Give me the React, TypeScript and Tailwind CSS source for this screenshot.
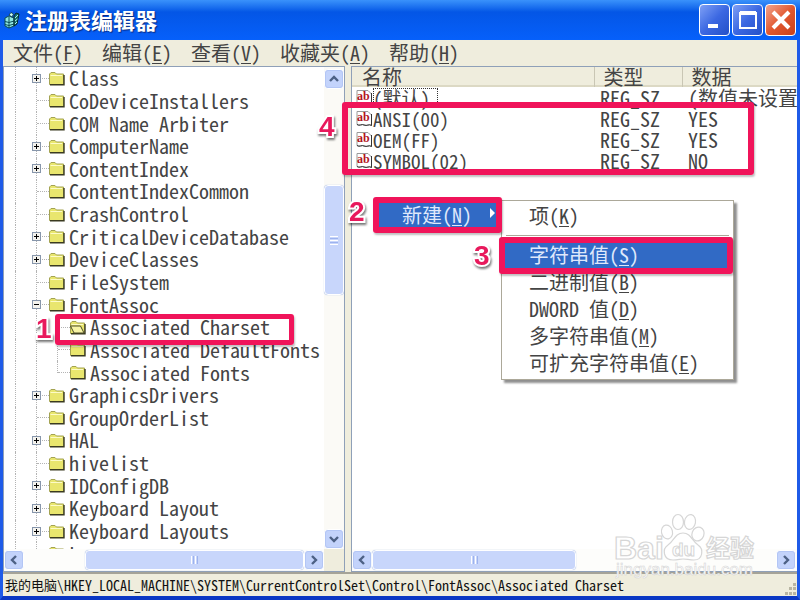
import { useState } from "react";
import type { ReactNode } from "react";

type TreeItem = {
  name: string;
  state?: "plus" | "minus";
  child?: boolean;
  last?: boolean;
  open?: boolean;
};

const tree: TreeItem[] = [
  { name: "Class", state: "plus" },
  { name: "CoDeviceInstallers" },
  { name: "COM Name Arbiter" },
  { name: "ComputerName", state: "plus" },
  { name: "ContentIndex", state: "plus" },
  { name: "ContentIndexCommon" },
  { name: "CrashControl" },
  { name: "CriticalDeviceDatabase", state: "plus" },
  { name: "DeviceClasses", state: "plus" },
  { name: "FileSystem" },
  { name: "FontAssoc", state: "minus" },
  { name: "Associated Charset", child: true, open: true },
  { name: "Associated DefaultFonts", child: true },
  { name: "Associated Fonts", child: true, last: true },
  { name: "GraphicsDrivers", state: "plus" },
  { name: "GroupOrderList" },
  { name: "HAL", state: "plus" },
  { name: "hivelist" },
  { name: "IDConfigDB", state: "plus" },
  { name: "Keyboard Layout", state: "plus" },
  { name: "Keyboard Layouts", state: "plus" },
  { name: "Lsa" },
];

const values = [
  { name: "(默认)", type: "REG_SZ", data: "(数值未设置)", focused: true },
  { name: "ANSI(00)", type: "REG_SZ", data: "YES" },
  { name: "OEM(FF)", type: "REG_SZ", data: "YES" },
  { name: "SYMBOL(02)", type: "REG_SZ", data: "NO" },
];

const menus = [
  { label: "文件", hotkey: "F" },
  { label: "编辑", hotkey: "E" },
  { label: "查看", hotkey: "V" },
  { label: "收藏夹", hotkey: "A" },
  { label: "帮助", hotkey: "H" },
];

const newItems = [
  { label: "字符串值", hotkey: "S" },
  { label: "二进制值", hotkey: "B" },
  { label: "DWORD 值", hotkey: "D" },
  { label: "多字符串值", hotkey: "M" },
  { label: "可扩充字符串值", hotkey: "E" },
];

function Label({ label, hotkey }: { label: string; hotkey: string }) {
  return (
    <>
      {label}(<u className="underline-offset-2 decoration-1">{hotkey}</u>)
    </>
  );
}

function Folder({ open }: { open?: boolean }) {
  return (
    <svg width="16" height="15" viewBox="0 0 16 15" className="shrink-0">
      <path d="M0.5 13.5V3L2 1.5H6L7.5 3H14.5V13.5Z" fill="#e9e66e" stroke="#a3a352" />
      <path d="M1.5 4.5H13" stroke="#fdfbc8" />
      <path d="M1 13.7H15V4" fill="none" stroke="#3a3a20" strokeWidth="1.4" />
      {open && <path d="M0.5 6H10.5L14 13H4Z" fill="#f7f4a6" stroke="#4a4a28" />}
    </svg>
  );
}

function StringIcon() {
  return (
    <svg width="17" height="16" viewBox="0 0 17 16" className="shrink-0">
      <path d="M1 0.5H12L15.5 4V14.5C13 12.5 11 15.5 8 14C6 12.5 3.5 15.5 1 13.5Z" fill="#fff" stroke="#9a9a9a" />
      <path d="M15.5 3V14.5C13 12.5 11 15.5 8 14C6 12.5 3.5 15.5 1 13.5" fill="none" stroke="#333" />
      <text x="1" y="10" fontFamily="Liberation Serif, serif" fontSize="12" fontWeight="700" fill="#b3141c">
        ab
      </text>
    </svg>
  );
}

function RegeditIcon() {
  return (
    <svg width="18" height="18" viewBox="0 0 18 18" className="shrink-0">
      <path d="M1 7L5 5L10 7V15L5 17L1 15Z" fill="#8fe9e3" stroke="#0b4a55" />
      <path d="M1 10.5L5 11.5L10 10M1 13.5L5 14.5L10 13M5 6V17" stroke="#0b4a55" fill="none" />
      <path d="M10 5L12 2L15 3L14 8L13 13L10 15Z" fill="#17706f" stroke="#042a30" />
      <path d="M5 4L7 1.5L9.5 3L8 6Z" fill="#c9fbf3" stroke="#06343c" strokeWidth="0.8" />
      <path d="M11 7L14 4M11 10L13.5 8M11 13L13 11" stroke="#a9f3ea" />
    </svg>
  );
}

function ScrollButton({ d, label }: { d: string; label: string }) {
  return (
    <button
      type="button"
      aria-label={label}
      className="flex h-5 w-5 shrink-0 items-center justify-center rounded-sm border border-white bg-[#c3d3fb] outline outline-1 -outline-offset-2 outline-[#b3c6f5]"
    >
      <svg width="10" height="10" viewBox="0 0 10 10">
        <path d={d} fill="none" stroke="#4d6185" strokeWidth="2.4" />
      </svg>
    </button>
  );
}

function WindowButton({ label, close, children }: { label: string; close?: boolean; children: ReactNode }) {
  return (
    <button
      type="button"
      aria-label={label}
      className={`flex h-8 w-[31px] items-center justify-center rounded-[4px] border border-white ${
        close
          ? "bg-linear-to-br from-[#f0a38c] via-[#e2582f] to-[#c8401c]"
          : "bg-linear-to-br from-[#7f9ff5] via-[#3c68e2] to-[#2350c8]"
      }`}
    >
      <svg width="22" height="22" viewBox="0 0 22 22">
        {children}
      </svg>
    </button>
  );
}

function TreeRow({ item, onSelect }: { item: TreeItem; onSelect: () => void }) {
  return (
    <li className="flex">
      <span className="ml-[11px] w-[21px] shrink-0 border-l border-dotted border-[#b4b4b4]" />
      <span className="relative flex w-[21px] shrink-0 items-center border-l border-dotted border-[#b4b4b4]">
        {!item.child && <span className="w-3 border-t border-dotted border-[#b4b4b4]" />}
        {item.state && (
          <button
            type="button"
            aria-label={item.state === "plus" ? "展开" : "折叠"}
            className="absolute -left-[5px] flex h-[9px] w-[9px] items-center justify-center border border-[#8796ab] bg-[#f4f3ee]"
          >
            <svg width="5" height="5" viewBox="0 0 5 5">
              <path d={item.state === "plus" ? "M0 2.5H5M2.5 0V5" : "M0 2.5H5"} stroke="#000" />
            </svg>
          </button>
        )}
      </span>
      {item.child && (
        <span className="flex w-[21px] shrink-0 items-center">
          <span className={`w-px border-l border-dotted border-[#b4b4b4] ${item.last ? "h-1/2 self-start" : "h-full"}`} />
          <span className="w-3 border-t border-dotted border-[#b4b4b4]" />
        </span>
      )}
      <button type="button" onClick={onSelect} className="-ml-2 flex items-center gap-1 whitespace-pre">
        <Folder open={item.open} />
        {item.name}
      </button>
    </li>
  );
}

function Step({ n, className }: { n: number; className: string }) {
  return (
    <span
      className={`absolute font-['Liberation_Sans',sans-serif] text-[28px] leading-7 font-bold text-[#e8195c] [paint-order:stroke] [-webkit-text-stroke:4px_white] drop-shadow-[1px_2px_1px_#00000088] ${className}`}
    >
      {n}
    </span>
  );
}

function Frame({ className }: { className: string }) {
  return (
    <span
      className={`pointer-events-none absolute rounded-[3px] border-[#f0145a] shadow-[1px_2px_2px_#00000040] ${className}`}
    />
  );
}

function Watermark() {
  return (
    <svg width="146" height="70" viewBox="0 0 146 70" className="pointer-events-none absolute right-[42px] bottom-[18px]">
      <g fill="#fff" stroke="#d6d6d6" strokeWidth="1.2">
        <ellipse cx="55" cy="20" rx="5.5" ry="7" transform="rotate(-12 55 20)" />
        <ellipse cx="66" cy="10" rx="5.5" ry="7.5" />
        <ellipse cx="78" cy="10" rx="5.5" ry="7.5" transform="rotate(10 78 10)" />
        <ellipse cx="86" cy="22" rx="6" ry="7" transform="rotate(20 86 22)" />
        <path d="M71 21C63 21 62 29 56 33C50 37 51 48 61 48C66 48 68 47 71 47C75 47 77 48 82 48C91 48 92 37 86 33C80 29 79 21 71 21Z" />
        <g fontFamily="Liberation Sans, Noto Sans CJK SC, sans-serif" fontWeight="700">
          <text x="2" y="47" fontSize="32">
            Bai
          </text>
          <text x="60" y="44" fontSize="19" strokeWidth="1">
            du
          </text>
          <text x="94" y="45" fontSize="24">
            经验
          </text>
        </g>
      </g>
      <text
        x="4"
        y="63"
        fontFamily="Liberation Sans, sans-serif"
        fontSize="17"
        fill="#fff"
        stroke="#d2d2d2"
        strokeWidth="0.5"
      >
        jingyan.baidu.com
      </text>
    </svg>
  );
}

export default function App() {
  const [selected, setSelected] = useState("Associated Charset");

  return (
    <div className="relative flex h-screen flex-col overflow-hidden bg-[#efeddd] font-['Noto_Sans_Mono_CJK_SC','Noto_Sans_CJK_SC',monospace] text-[20px] text-[#444]">
      {/* Title bar */}
      <header className="flex h-10 shrink-0 items-center bg-linear-to-b from-[#3a92fb] via-[#0456e6] via-30% to-[#0660fb] pr-1 pl-1">
        <RegeditIcon />
        <h1 className="ml-[3px] flex-1 pb-[2px] text-[22px] leading-7 font-bold text-white [text-shadow:1px_1px_1px_#0a2a80]">
          注册表编辑器
        </h1>
        <div className="flex gap-[2px]">
          <WindowButton label="最小化">
            <path d="M4 17H14" stroke="#fff" strokeWidth="4" />
          </WindowButton>
          <WindowButton label="最大化">
            <path d="M3 4H19" stroke="#fff" strokeWidth="4" />
            <path d="M3 4H19V19H3Z" fill="none" stroke="#fff" strokeWidth="2" />
          </WindowButton>
          <WindowButton label="关闭" close>
            <path d="M3 3L19 19M19 3L3 19" stroke="#fff" strokeWidth="4" />
          </WindowButton>
        </div>
      </header>

      <div className="flex min-h-0 flex-1 flex-col border-x-[3px] border-b-4 border-x-[#1f5be8] border-b-[#0a37c4]">
        <nav className="flex h-[26px] shrink-0 items-center gap-[19px] pl-[10px]">
          {menus.map((m) => (
            <button type="button" key={m.hotkey} className="leading-6">
              <Label {...m} />
            </button>
          ))}
        </nav>

        <main className="flex min-h-0 flex-1">
          {/* Key tree */}
          <section className="flex w-[342px] shrink-0 flex-col border border-[#8fa0b8] bg-white">
            <div className="flex min-h-0 flex-1 overflow-hidden">
              <ul className="grid h-[498px] min-w-0 flex-1 auto-rows-fr leading-5">
                {tree.map((item) => (
                  <TreeRow
                    key={item.name}
                    item={{ ...item, open: item.name === selected }}
                    onSelect={() => setSelected(item.name)}
                  />
                ))}
              </ul>
              <div className="flex w-5 shrink-0 flex-col bg-[#fbfaf6] pt-[2px]">
                <ScrollButton label="向上滚动" d="M1 7L5 3L9 7" />
                <span className="grow-[96]" />
                <span className="flex h-[110px] flex-col items-center justify-center gap-px rounded-sm border border-white bg-[#c8d6fb] shadow-[0_0_1px_#8fa8e0]">
                  <i className="h-px w-2 bg-white" />
                  <i className="h-px w-2 bg-[#9db3ee]" />
                  <i className="h-px w-2 bg-white" />
                  <i className="h-px w-2 bg-[#9db3ee]" />
                  <i className="h-px w-2 bg-white" />
                </span>
                <span className="grow-[233]" />
                <ScrollButton label="向下滚动" d="M1 3L5 7L9 3" />
              </div>
            </div>
            <div className="flex h-[22px] shrink-0 items-center bg-[#fdfdfb]">
              <ScrollButton label="向左滚动" d="M7 1L3 5L7 9" />
              <span className="flex-1" />
              <span className="flex h-5 w-[219px] items-center justify-center gap-px rounded-sm border border-white bg-[#c8d6fb] shadow-[0_0_1px_#8fa8e0]">
                <i className="h-2 w-px bg-white" />
                <i className="h-2 w-px bg-[#9db3ee]" />
                <i className="h-2 w-px bg-white" />
                <i className="h-2 w-px bg-[#9db3ee]" />
              </span>
              <ScrollButton label="向右滚动" d="M3 1L7 5L3 9" />
              <span className="h-full w-5 bg-[#efeddd]" />
            </div>
          </section>

          {/* Values */}
          <section className="ml-[6px] flex min-w-0 flex-1 flex-col border border-r-0 border-[#8fa0b8] bg-white">
            <div className="min-h-0 flex-1 overflow-hidden">
              <table className="w-full table-fixed text-left leading-5 whitespace-nowrap">
                <thead>
                  <tr className="h-5 bg-[#efeddd] shadow-[inset_0_-2px_0_#dcd9c4]">
                    <th className="w-[242px] p-0 pl-[10px] font-normal">名称</th>
                    <th className="w-[88px] border-l border-[#c9c6b4] p-0 pl-[9px] font-normal">类型</th>
                    <th className="border-l border-[#c9c6b4] p-0 pl-[9px] font-normal">数据</th>
                  </tr>
                </thead>
                <tbody>
                  {values.map((v) => (
                    <tr key={v.name} className="h-[21px]">
                      <td className="p-0 pl-1 text-[19px]">
                        <span className="flex items-center">
                          <StringIcon />
                          <span
                            className={
                              v.focused ? "pr-2 outline outline-1 -outline-offset-1 outline-dotted outline-[#333]" : ""
                            }
                          >
                            {v.name}
                          </span>
                        </span>
                      </td>
                      <td className="p-0 pl-[6px]">{v.type}</td>
                      <td className="p-0 pl-[6px]">{v.data}</td>
                    </tr>
                  ))}
                </tbody>
              </table>
            </div>
            <div className="flex h-[22px] shrink-0 items-center bg-[#fdfdfb] pr-px">
              <ScrollButton label="向左滚动" d="M7 1L3 5L7 9" />
              <span className="flex h-5 w-[204px] items-center justify-center gap-px rounded-sm border border-white bg-[#c8d6fb] shadow-[0_0_1px_#8fa8e0]">
                <i className="h-2 w-px bg-white" />
                <i className="h-2 w-px bg-[#9db3ee]" />
                <i className="h-2 w-px bg-white" />
                <i className="h-2 w-px bg-[#9db3ee]" />
              </span>
              <span className="flex-1" />
              <ScrollButton label="向右滚动" d="M3 1L7 5L3 9" />
            </div>
          </section>
        </main>

        <footer className="flex h-6 shrink-0 items-center border-t-2 border-[#a5a398] pl-[2px] text-[14px] leading-5 whitespace-pre text-[#111]">
          <span className="text-[13px]">我的电脑</span>
          <span className="flex-1">
            {"\\HKEY_LOCAL_MACHINE\\SYSTEM\\CurrentControlSet\\Control\\FontAssoc\\Associated Charset"}
          </span>
          <svg width="14" height="14" viewBox="0 0 14 14" className="self-end">
            <path d="M10 1h3v3h-3zM6 5h3v3H6zM10 5h3v3h-3zM2 10h3v3H2zM6 10h3v3H6zM10 10h3v3h-3z" fill="#b8b5a2" />
          </svg>
        </footer>
      </div>

      {/* Context menu with its submenu */}
      <button
        type="button"
        className="absolute top-[201px] left-[378px] flex h-7 w-[120px] items-center bg-[#316ac5] pr-[3px] pl-6 leading-6 text-[#dfe8fb]"
      >
        <Label label="新建" hotkey="N" />
        <svg width="5" height="10" viewBox="0 0 5 10" className="mb-1 ml-auto">
          <path d="M0 0L5 5L0 10Z" fill="#fff" />
        </svg>
      </button>
      <div className="absolute top-[200px] left-[501px] w-[233px] border border-[#aca899] bg-white pt-px pb-[3px] shadow-[3px_3px_2px_#00000070]">
        <button type="button" className="block h-7 w-full pl-[27px] text-left leading-7">
          <Label label="项" hotkey="K" />
        </button>
        <hr className="mx-1 my-[5px] border-[#aca899]" />
        {newItems.map((item, i) => (
          <button
            type="button"
            key={item.hotkey}
            className={`block h-[27px] w-full pl-[27px] text-left leading-[27px] ${i === 0 ? "bg-[#316ac5] text-[#dfe8fb]" : ""}`}
          >
            <Label {...item} />
          </button>
        ))}
      </div>

      <Watermark />

      {/* Numbered callouts */}
      <Frame className="top-[314px] left-[55px] h-[31px] w-[239px] border-[5px]" />
      <Frame className="top-[197px] left-[373px] h-9 w-[129px] border-[6px]" />
      <Frame className="top-[237px] left-[499px] h-[37px] w-[234px] border-[6px]" />
      <Frame className="top-[102px] left-[342px] h-[73px] w-[412px] border-[6px]" />
      <Step n={1} className="top-[315px] left-[36px]" />
      <Step n={2} className="top-[198px] left-[349px]" />
      <Step n={3} className="top-[242px] left-[474px]" />
      <Step n={4} className="top-[113px] left-[319px]" />
    </div>
  );
}
